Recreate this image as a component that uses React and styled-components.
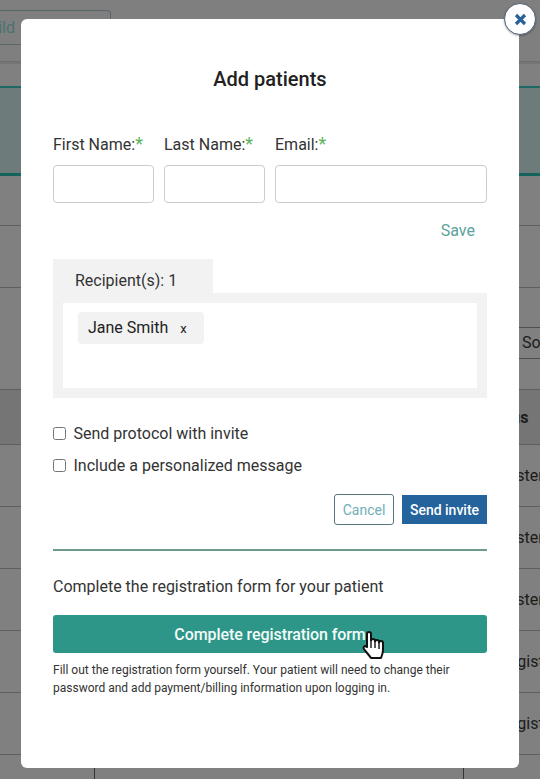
import styled, { createGlobalStyle } from "styled-components";

const Global = createGlobalStyle`
  html, body { margin: 0; padding: 0; }
  body {
    width: 540px;
    height: 779px;
    overflow: hidden;
    background: #808080;
    font-family: Roboto, "Liberation Sans", sans-serif;
    color: #333;
  }
`;

const Page = styled.div`
  position: relative;
  width: 540px;
  height: 779px;
  overflow: hidden;
  background: #808080;
  color: #1b1b1b;
`;

const TopBar = styled.div`
  height: 62px;
  box-sizing: border-box;
  padding-top: 10px;
  background: #7f7f7f;
  border-bottom: 1px solid #6f6f6f;
`;

const ChildButton = styled.div`
  width: 111px;
  height: 35px;
  box-sizing: border-box;
  display: flex;
  justify-content: flex-end;
  align-items: center;
  padding-right: 95px;
  border: 1px solid #56696a;
  border-left: 0;
  border-radius: 0 4px 4px 0;
  font-size: 16px;
  color: #4a7370;
  white-space: nowrap;
`;

const SubBar = styled.div`
  height: 24px;
  background: #808080;
  border-top: 2px solid #757575;
  box-sizing: border-box;
`;

const TealBand = styled.div`
  height: 90px;
  box-sizing: border-box;
  background: #6d7b7b;
  border-top: 2px solid #1d6a64;
  border-bottom: 3px solid #14635d;
`;

const Row = styled.div`
  height: ${(p) => p.$h}px;
  box-sizing: border-box;
  display: flex;
  align-items: center;
  padding-left: ${(p) => p.$x || 0}px;
  background: ${(p) => (p.$head ? "#757575" : "#808080")};
  border-bottom: 1px solid #5f5f5f;
  font-size: 16px;
  font-weight: ${(p) => (p.$head ? 700 : 400)};
  white-space: nowrap;
`;

const SortCell = styled.div`
  width: 24px;
  height: 32px;
  line-height: 30px;
  box-sizing: border-box;
  overflow: hidden;
  margin: 8px 0 0 516px;
  padding-left: 6px;
  border-top: 1px solid #4f4f4f;
  border-bottom: 1px solid #4f4f4f;
`;

const ColumnRow = styled(Row)`
  display: grid;
  grid-template-columns: 94px 369px 1fr;
  border-bottom: 0;
`;

const ColumnCell = styled.div`
  height: 100%;
  border-left: ${(p) => (p.$line ? "1px solid #333" : "0")};
`;

const Modal = styled.div`
  position: absolute;
  left: 21px;
  top: 19px;
  width: 498px;
  height: 749px;
  box-sizing: border-box;
  padding: 49px 32px 0;
  background: #fff;
  border-radius: 6px;
  color: #333;
  font-size: 16px;
`;

const Title = styled.h2`
  margin: 0;
  height: 22px;
  line-height: 22px;
  text-align: center;
  font-size: 20px;
  font-weight: 500;
  color: #212121;
`;

const Fields = styled.div`
  display: grid;
  grid-template-columns: 101px 101px 212px;
  gap: 10px;
  margin-top: 44px;
`;

const Field = styled.label`
  display: flex;
  flex-direction: column;
  gap: 11px;
`;

const LabelText = styled.span`
  height: 20px;
  line-height: 20px;
  white-space: nowrap;
`;

const Star = styled.span`
  color: #5cb35c;
  font-size: 18px;
`;

const TextInput = styled.input`
  width: 100%;
  height: 38px;
  box-sizing: border-box;
  border: 1px solid #ccc;
  border-radius: 4px;
  background: #fff;
`;

const SaveRow = styled.div`
  display: flex;
  justify-content: flex-end;
  height: 20px;
  line-height: 20px;
  margin-top: 18px;
  padding-right: 12px;
  color: #5aa39b;
`;

const RecipientTab = styled.div`
  width: 160px;
  height: 34px;
  box-sizing: border-box;
  margin-top: 18px;
  padding-left: 22px;
  line-height: 43px;
  background: #f2f2f2;
`;

const RecipientBox = styled.div`
  height: 105px;
  box-sizing: border-box;
  padding: 10px;
  background: #f2f2f2;
`;

const RecipientInner = styled.div`
  height: 85px;
  box-sizing: border-box;
  padding: 9px 15px;
  background: #fff;
`;

const Chip = styled.div`
  display: inline-flex;
  align-items: center;
  width: 126px;
  height: 32px;
  box-sizing: border-box;
  padding: 0 0 2px 10px;
  gap: 12px;
  background: #f2f2f2;
  border-radius: 4px;
  color: #212121;
`;

const ChipClose = styled.span`
  font-size: 13px;
  padding-top: 2px;
`;

const Checks = styled.div`
  display: flex;
  flex-direction: column;
  gap: 12px;
  margin-top: 25px;
`;

const CheckRow = styled.label`
  display: flex;
  align-items: center;
  gap: 7.5px;
  height: 20px;
`;

const CheckBox = styled.input`
  width: 13px;
  height: 13px;
  margin: 0;
`;

const Actions = styled.div`
  display: flex;
  justify-content: flex-end;
  align-items: center;
  gap: 8px;
  margin-top: 19px;
`;

const CancelButton = styled.button`
  width: 60px;
  height: 31px;
  padding: 0;
  background: #fff;
  border: 1px solid #56757f;
  border-radius: 3px;
  font: 400 14px Roboto, sans-serif;
  color: #6fb0b5;
`;

const SendButton = styled.button`
  width: 85px;
  height: 29px;
  padding: 0;
  background: #24639b;
  border: 0;
  font: 500 14px Roboto, sans-serif;
  color: #fff;
`;

const Divider = styled.hr`
  height: 2px;
  margin: 24px 0 0;
  border: 0;
  background: #6f9a90;
`;

const CompleteText = styled.p`
  margin: 26px 0 0;
  height: 20px;
  line-height: 20px;
`;

const CompleteButton = styled.button`
  position: relative;
  display: block;
  width: 100%;
  height: 38px;
  margin-top: 18px;
  padding: 0;
  background: #2e9688;
  border: 0;
  border-radius: 3px;
  font: 500 16px Roboto, sans-serif;
  letter-spacing: -0.08px;
  color: #f2fbf9;
`;

const Cursor = styled.svg`
  position: absolute;
  left: 309px;
  top: 16px;
  width: 26px;
  height: 31px;
`;

const Fine = styled.p`
  margin: 8px 0 0;
  font-size: 12px;
  line-height: 18px;
  color: #333;
`;

const CloseButton = styled.button`
  position: absolute;
  left: 504px;
  top: 3px;
  width: 32px;
  height: 32px;
  display: flex;
  align-items: center;
  justify-content: center;
  padding: 0;
  background: #fff;
  border: 1px solid #4d6378;
  border-radius: 50%;
  box-shadow: 0 1px 2px rgba(0, 0, 0, 0.3);
`;

const fields = ["First Name:", "Last Name:", "Email:"];

export default function App() {
  return (
    <Page>
      <Global />
      <TopBar>
        <ChildButton>Child</ChildButton>
      </TopBar>
      <SubBar />
      <TealBand />
      <Row $h={50} />
      <Row $h={62} />
      <Row $h={102}>
        <SortCell>Sort</SortCell>
      </Row>
      <Row $h={55} $head $x={482}>
        Status
      </Row>
      <Row $h={62} $x={485}>
        Registered
      </Row>
      <Row $h={62} $x={485}>
        Registered
      </Row>
      <Row $h={62} $x={485}>
        Registered
      </Row>
      <Row $h={62} $x={499}>
        Registered
      </Row>
      <Row $h={62} $x={499}>
        Registered
      </Row>
      <ColumnRow $h={62}>
        <ColumnCell />
        <ColumnCell $line />
        <ColumnCell $line />
      </ColumnRow>

      <Modal>
        <Title>Add patients</Title>
        <Fields>
          {fields.map((name) => (
            <Field key={name}>
              <LabelText>
                {name}
                <Star>*</Star>
              </LabelText>
              <TextInput type="text" />
            </Field>
          ))}
        </Fields>
        <SaveRow>Save</SaveRow>
        <RecipientTab>Recipient(s): 1</RecipientTab>
        <RecipientBox>
          <RecipientInner>
            <Chip>
              Jane Smith
              <ChipClose>x</ChipClose>
            </Chip>
          </RecipientInner>
        </RecipientBox>
        <Checks>
          <CheckRow>
            <CheckBox type="checkbox" />
            Send protocol with invite
          </CheckRow>
          <CheckRow>
            <CheckBox type="checkbox" />
            Include a personalized message
          </CheckRow>
        </Checks>
        <Actions>
          <CancelButton>Cancel</CancelButton>
          <SendButton>Send invite</SendButton>
        </Actions>
        <Divider />
        <CompleteText>Complete the registration form for your patient</CompleteText>
        <CompleteButton>
          Complete registration form
          <Cursor viewBox="0 0 26 31">
            <path
              d="M5 16V3a2 2 0 0 1 4 0V10a2 2 0 0 1 4 0v1a2 2 0 0 1 4 0v1a2 2 0 0 1 4 0v7c0 3-1 5-2 8H9C7 24 4 21 2 18c-1.5-2 1-4 3-2z"
              fill="#fff"
              stroke="#111"
              strokeWidth="2"
              strokeLinejoin="round"
            />
            <path d="M9 11v6M13 12v5M17 13v5" stroke="#111" strokeWidth="1.4" />
          </Cursor>
        </CompleteButton>
        <Fine>
          Fill out the registration form yourself. Your patient will need to change their
          <br />
          password and add payment/billing information upon logging in.
        </Fine>
      </Modal>
      <CloseButton aria-label="Close">
        <svg width="13" height="13" viewBox="0 0 13 13">
          <path d="M2 2l9 9M11 2l-9 9" stroke="#2a6299" strokeWidth="3.2" />
        </svg>
      </CloseButton>
    </Page>
  );
}
